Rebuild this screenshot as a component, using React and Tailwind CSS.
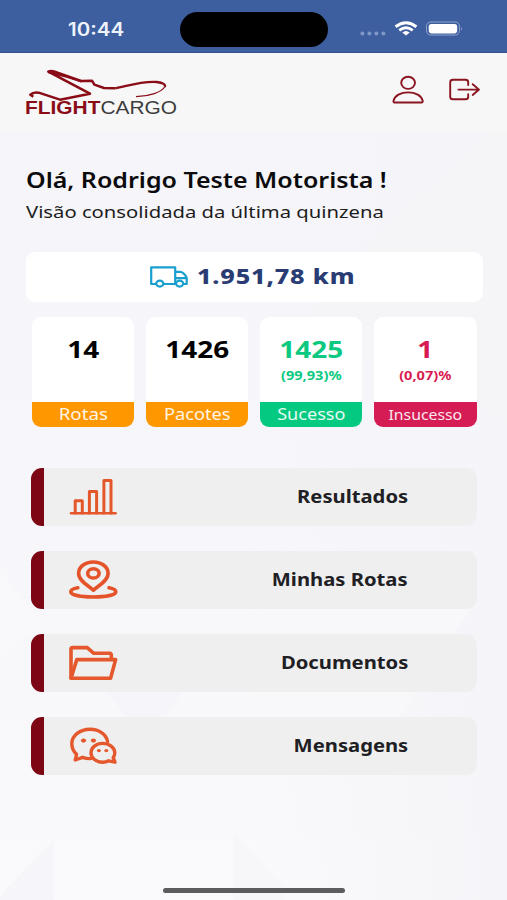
import React from 'react';

const StatusBar = () => (
  <div className="flex h-[53px] shrink-0 bg-[#3e5f9f] border-b border-[#34518c]">
    <div className="w-[180px] pl-[68px] pt-[18px]">
      <div className="origin-left scale-x-[1.14] whitespace-nowrap font-['Inter',sans-serif] text-[18px] leading-[23px] font-semibold text-[#eef2fa]">
        10:44
      </div>
    </div>
    <div className="mt-3 h-[35px] w-[148px] rounded-full bg-black" />
    <svg className="mt-[18px] ml-8 h-5 w-[105px]" viewBox="360 18 105 20" fill="none">
      <g fill="#7f97c5">
        <circle cx="362.4" cy="33.4" r="2" />
        <circle cx="369.4" cy="33.4" r="2" />
        <circle cx="376.4" cy="33.4" r="2" />
        <circle cx="383.4" cy="33.4" r="2" />
      </g>
      <path d="M395.6 26.8Q406 18.8 416.4 26.8" stroke="#fff" strokeWidth="3" />
      <path d="M399.3 30.3Q406 25.3 412.7 30.3" stroke="#fff" strokeWidth="2.8" />
      <path d="M402.3 32.6Q406 29.4 409.7 32.6L406 35.6Z" fill="#fff" />
      <rect x="426.5" y="22" width="33" height="13" rx="4.2" stroke="#8fa4cd" />
      <rect x="428.7" y="24" width="28.5" height="9.4" rx="2.8" fill="#fff" />
      <path d="M461 26.5Q462.8 28.5 461 30.7Z" fill="#8fa4cd" />
    </svg>
  </div>
);

const Logo = () => (
  <div className="w-[154px]">
    <svg className="ml-1 h-[32px] w-[140px]" viewBox="84 206 420 96" fill="none" stroke="#8a0c17" strokeLinejoin="round">
      <path
        d="M100 289L91 283Q100 274 116 277L180 298L270 280L145 214Q152 210 162 213L243 242L276 241L283 253L312 263L346 264"
        strokeWidth="7.5"
      />
      <path d="M346 264C382 257 425 242 470 245C490 247 498 253 494 260" strokeWidth="7" />
      <path d="M494 260C484 275 450 288 408 289" strokeWidth="3.5" />
      <path d="M145 215L200 229L245 243" strokeWidth="7" />
    </svg>
    <div className="-mt-[4px] ml-px origin-left scale-x-[1.16] whitespace-nowrap font-['Liberation_Sans',sans-serif] text-[18px] leading-[22px] text-[#3c3c3c]">
      <span className="font-bold text-[#8a0c17]">FLIGHT</span>CARGO
    </div>
  </div>
);

const Header = () => (
  <div className="flex h-[80px] shrink-0 items-start bg-[#f7f7f7] pl-6 pt-4">
    <Logo />
    <svg className="ml-[208px] mt-1 h-9 w-[104px]" viewBox="386 73 104 36" fill="none" stroke="#8a1420" strokeWidth="1.9" strokeLinecap="round" strokeLinejoin="round">
      <ellipse cx="408.1" cy="82.8" rx="6.9" ry="6.1" />
      <path d="M394.6 102.5H421.6Q423 102.5 422.7 100.8C421.5 95.7 415.5 92.4 408.1 92.4S394.7 95.7 393.5 100.8Q393.2 102.5 394.6 102.5Z" />
      <path d="M468.2 85V82.3Q468.2 79.8 465.4 79.8H453Q450.2 79.8 450.2 82.3V96.7Q450.2 99.3 453 99.3H465.4Q468.2 99.3 468.2 96.7V94.2" />
      <path d="M458.4 89.6H479M472.7 84.2L479 89.6L472.7 94.9" />
    </svg>
  </div>
);

// Faint geometric shapes behind the page content
const Backdrop = () => (
  <svg className="absolute inset-0 -z-10 h-full w-full" viewBox="0 0 507 900" preserveAspectRatio="none">
    <defs>
      <linearGradient id="page" x1="0" y1="0" x2="0" y2="1">
        <stop offset="0" stopColor="#f5f4f8" />
        <stop offset="0.6" stopColor="#f7f6fa" />
        <stop offset="1" stopColor="#fafafc" />
      </linearGradient>
      <linearGradient id="side" x1="0" y1="0" x2="1" y2="0">
        <stop offset="0.5" stopColor="#f5f4f8" stopOpacity="0" />
        <stop offset="1" stopColor="#f5f4f8" />
      </linearGradient>
    </defs>
    <rect width="507" height="900" fill="url(#page)" />
    <rect width="507" height="900" fill="url(#side)" />
    <path d="M507 120L360 252L300 330L507 420Z" fill="#f5f5f7" />
    <path d="M0 570L42 625L0 660Z" fill="#f9f9fb" />
    <path d="M262 609H470L400 717H250Z" fill="#f8f8fa" />
    <path d="M108 692H182L165 717H126Z" fill="#f6f5f9" />
    <path d="M0 896L54 840V900H0Z" fill="#f6f5f9" />
    <path d="M233 832L284 886V900H233Z" fill="#f7f6f9" />
  </svg>
);

const TruckIcon = () => (
  <svg className="h-6 w-10" viewBox="149 265 40 24" fill="none" stroke="#189fce" strokeWidth="2.2" strokeLinejoin="round">
    <path d="M156 284H151.2V267.4H175.2V284H163.5M175.2 271.8H180.5Q184.5 273 186.7 278V284H183.5M175.2 278.2H186.7" />
    <ellipse cx="159.8" cy="283.6" rx="3.6" ry="3" />
    <ellipse cx="179.6" cy="283.6" rx="3.6" ry="3" />
  </svg>
);

const stats = [
  {
    value: '14',
    label: 'Rotas',
    text: 'text-black',
    bar: 'bg-[#ff9800]',
    labelSize: 'text-[16px] scale-x-[1.17]',
  },
  {
    value: '1426',
    label: 'Pacotes',
    text: 'text-black',
    bar: 'bg-[#ff9800]',
    labelSize: 'text-[16px] scale-x-[1.14]',
  },
  {
    value: '1425',
    percent: '(99,93)%',
    label: 'Sucesso',
    text: 'text-[#0bc980]',
    bar: 'bg-[#04c980]',
    labelSize: 'text-[16px] scale-x-[1.13]',
  },
  {
    value: '1',
    percent: '(0,07)%',
    label: 'Insucesso',
    text: 'text-[#d81b52]',
    bar: 'bg-[#d51c54]',
    labelSize: 'text-[14.5px] scale-x-[1.09]',
  },
];

const StatCard = ({ stat }) => (
  <div className="flex h-[110px] flex-col overflow-hidden rounded-[9px] bg-white text-center">
    <div className={`flex-1 pt-[18px] font-bold ${stat.text}`}>
      <div className="scale-x-[1.24] text-[22.5px] leading-[30px]">{stat.value}</div>
      {stat.percent && <div className="mt-[3px] scale-x-[1.27] text-[11.5px] leading-4">{stat.percent}</div>}
    </div>
    <div className={`h-[25px] ${stat.bar}`}>
      <div className={`leading-[25px] text-white/90 ${stat.labelSize}`}>{stat.label}</div>
    </div>
  </div>
);

const ResultsIcon = () => (
  <svg className="h-12 w-[52px]" viewBox="67 473 52 48" fill="none" stroke="#e4572a" strokeWidth="3" strokeLinecap="round" strokeLinejoin="round">
    <path d="M71 513.3H115.6" strokeWidth="2.5" />
    <path d="M75.2 513V500.8H82.3V513M89.4 513V491.5H96.6V513M103.9 513V480.6H111V513" />
  </svg>
);

const RouteIcon = () => (
  <svg className="h-12 w-[52px]" viewBox="67 556 52 48" fill="none" stroke="#e4532a" strokeWidth="3.6" strokeLinecap="round" strokeLinejoin="round">
    <path d="M93.4 590.2C90 586.5 78.6 581.5 78.6 573.3C78.6 567 85 562 93.3 562S108.1 567 108.1 573.3C108.1 581.5 96.8 586.5 93.4 590.2Z" />
    <ellipse cx="93.4" cy="573.4" rx="5.7" ry="4.6" />
    <path d="M77.8 587.8C73.5 588.6 70.8 590 70.8 591.8C70.8 594.8 80.5 597 93.3 597S115.8 594.8 115.8 591.8C115.8 590 113.2 588.6 109 587.8" />
  </svg>
);

const FolderIcon = () => (
  <svg className="h-12 w-[52px]" viewBox="67 639 52 48" fill="none" stroke="#e5572c" strokeWidth="3.6" strokeLinecap="round" strokeLinejoin="round">
    <path d="M71 678V649.2Q71 647.6 73 647.6H87.2L93.5 653.2H109.5Q111.3 653.2 111.3 655V659" />
    <path d="M71 678.2L76.8 659.6H115.6L110.6 678.2Z" />
  </svg>
);

const ChatIcon = () => (
  <svg className="h-12 w-[52px]" viewBox="67 722 52 48" fill="none" stroke="#e5572c" strokeWidth="3.4" strokeLinecap="round" strokeLinejoin="round">
    <path d="M107.6 741.5C106.4 734.5 99.2 729.3 90.2 729.3C80 729.3 71.8 735.6 71.8 743.6C71.8 748.4 73.4 751.6 76.6 754.4L75.2 760L82.6 757.3Q86.4 758.8 90.8 758.6" />
    <path d="M102.6 743.4C96.2 743.4 91 747.6 91 752.8C91 758.1 96.2 762.2 102.6 762.2Q106 762.2 108.6 760.8L115 762.2L113.2 757.6Q114.8 755.4 114.8 752.8C114.8 747.6 109.2 743.4 102.6 743.4Z" />
    <g fill="#e5572c" stroke="none">
      <ellipse cx="83.5" cy="740.6" rx="2.6" ry="2.1" />
      <ellipse cx="93.4" cy="740.6" rx="2.6" ry="2.1" />
      <ellipse cx="98.9" cy="750.6" rx="2" ry="1.6" />
      <ellipse cx="106.3" cy="750.6" rx="2" ry="1.6" />
    </g>
  </svg>
);

const menu = [
  { label: 'Resultados', icon: ResultsIcon },
  { label: 'Minhas Rotas', icon: RouteIcon },
  { label: 'Documentos', icon: FolderIcon },
  { label: 'Mensagens', icon: ChatIcon },
];

const MenuItem = ({ item }) => {
  const Icon = item.icon;
  return (
    <button className="flex h-[58px] w-full items-center overflow-hidden rounded-[11px] bg-[#efefef]">
      <span className="h-full w-[12.5px] bg-[#7c0613]" />
      <span className="ml-[23.5px]">
        <Icon />
      </span>
      <span className="mr-[69px] mb-0.5 ml-auto origin-right scale-x-[1.155] text-[17.5px] leading-6 font-bold text-[#202024]">
        {item.label}
      </span>
    </button>
  );
};

const App = () => {
  return (
    <div className="relative isolate flex h-[900px] w-[507px] flex-col overflow-hidden font-['Noto_Sans',sans-serif]">
      <Backdrop />
      <StatusBar />
      <Header />

      <div className="pt-[33px] pl-[26px]">
        <h1 className="w-max origin-left scale-x-[1.19] text-[21px] leading-[28px] font-semibold whitespace-nowrap text-[#0b0b0d]">
          Olá, Rodrigo Teste Motorista !
        </h1>
        <p className="mt-[6px] w-max origin-left scale-x-[1.19] text-[17px] leading-6 whitespace-nowrap text-[#1d1d20]">
          Visão consolidada da última quinzena
        </p>
      </div>

      <div className="mt-[28px] ml-[26px] flex h-[50px] w-[457px] shrink-0 items-center rounded-[9px] bg-white pl-[123px]">
        <TruckIcon />
        <span className="mb-0.5 ml-[8px] origin-left scale-x-[1.17] text-[21.5px] leading-7 font-extrabold tracking-[0.7px] whitespace-nowrap text-[#2a3c74]">
          1.951,78 km
        </span>
      </div>

      <div className="mt-[15px] mr-[30.5px] ml-[31.5px] grid grid-cols-4 gap-[11.6px]">
        {stats.map((stat) => (
          <StatCard key={stat.label} stat={stat} />
        ))}
      </div>

      <div className="mt-[41px] mr-[30px] ml-[31px] flex flex-col gap-[25px]">
        {menu.map((item) => (
          <MenuItem key={item.label} item={item} />
        ))}
      </div>

      <div className="mt-auto mb-[7px] ml-[163px] h-[5.5px] w-[182px] rounded-full bg-[#5c5c5e]" />
    </div>
  );
};

export default App;
